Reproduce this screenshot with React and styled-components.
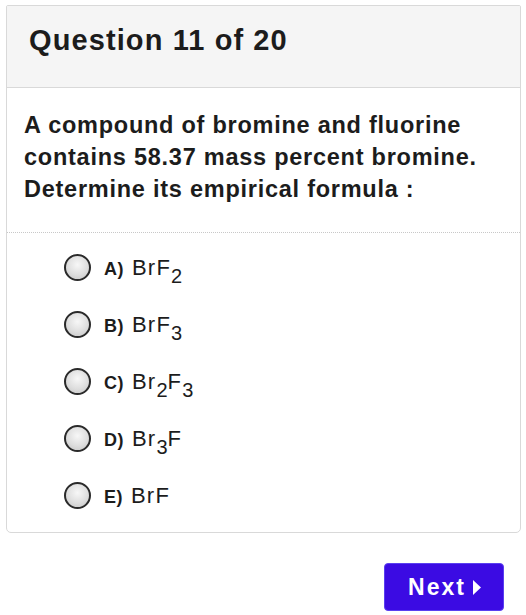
import React from "react";
import styled, { createGlobalStyle } from "styled-components";

const Global = createGlobalStyle`
  html, body { margin: 0; padding: 0; background: #fff; }
  body { font-family: "Liberation Sans", Arial, sans-serif; color: #1a1a1a; }
`;

const Page = styled.div`
  width: 526px;
  padding: 5px 0 0 6px;
  box-sizing: border-box;
`;

const Card = styled.div`
  width: 515px;
  border: 1px solid #d9d9d9;
  border-radius: 2px 2px 5px 5px;
  box-sizing: border-box;
  overflow: hidden;
`;

const Header = styled.div`
  height: 82px;
  background: #f5f5f5;
  border-bottom: 1px solid #d9d9d9;
  display: flex;
  align-items: center;
  padding: 0 0 12px 22px;
  box-sizing: border-box;
`;

const Title = styled.h1`
  margin: 0;
  font-size: 29px;
  font-weight: 700;
  color: #1c1c1c;
  letter-spacing: 1.1px;
`;

const Question = styled.div`
  padding: 21px 10px 27px 17px;
  font-size: 23.5px;
  font-weight: 700;
  line-height: 32px;
  letter-spacing: 0.75px;
  color: #1c1c1c;
  border-bottom: 1px dotted #c8c8c8;
  white-space: nowrap;
`;

const Options = styled.div`
  display: flex;
  flex-direction: column;
  padding: 6px 0 8px 57px;
`;

const Option = styled.label`
  display: flex;
  align-items: center;
  height: 57px;
  gap: 13px;
`;

const Radio = styled.span`
  width: 27px;
  height: 27px;
  border-radius: 50%;
  border: 2px solid #2a2a2a;
  background: radial-gradient(circle at 50% 38%, #f7f7f7 0%, #dedede 55%, #c4c4c4 100%);
  box-sizing: border-box;
  flex: none;
`;

const Letter = styled.span`
  font-size: 18px;
  font-weight: 700;
  color: #1c1c1c;
  letter-spacing: 0.5px;
  margin-right: 8px;
`;

const Formula = styled.span`
  font-size: 22px;
  letter-spacing: 1.2px;
  color: #1c1c1c;
  sub {
    font-size: 20px;
    vertical-align: -8px;
    line-height: 0;
    letter-spacing: 0;
  }
`;

const Footer = styled.div`
  display: flex;
  justify-content: flex-end;
  padding: 30px 22px 0 0;
`;

const NextButton = styled.button`
  width: 120px;
  height: 48px;
  background: #3b0be3;
  border: 1px solid #5a3ff0;
  border-radius: 4px;
  color: #fff;
  font-family: "Liberation Sans", Arial, sans-serif;
  font-size: 23px;
  font-weight: 700;
  letter-spacing: 2px;
  display: flex;
  align-items: center;
  justify-content: center;
  gap: 6px;
  padding: 0 0 0 2px;
  cursor: pointer;
`;

const options = [
  { l: "A)", f: ["BrF", ["2"]] },
  { l: "B)", f: ["BrF", ["3"]] },
  { l: "C)", f: ["Br", ["2"], "F", ["3"]] },
  { l: "D)", f: ["Br", ["3"], "F"] },
  { l: "E)", f: ["BrF"] },
];

export default function App() {
  return (
    <Page>
      <Global />
      <Card>
        <Header>
          <Title>Question 11 of 20</Title>
        </Header>
        <Question>
          A compound of bromine and fluorine
          <br />
          contains 58.37 mass percent bromine.
          <br />
          Determine its empirical formula :
        </Question>
        <Options>
          {options.map((o) => (
            <Option key={o.l}>
              <Radio />
              <span>
                <Letter>{o.l}</Letter>
                <Formula>
                  {o.f.map((p, i) =>
                    Array.isArray(p) ? <sub key={i}>{p[0]}</sub> : <React.Fragment key={i}>{p}</React.Fragment>
                  )}
                </Formula>
              </span>
            </Option>
          ))}
        </Options>
      </Card>
      <Footer>
        <NextButton>
          Next
          <svg width="10" height="17" viewBox="0 0 10 17">
            <path d="M1 1 L9 8.5 L1 16 Z" fill="#fff" />
          </svg>
        </NextButton>
      </Footer>
    </Page>
  );
}
